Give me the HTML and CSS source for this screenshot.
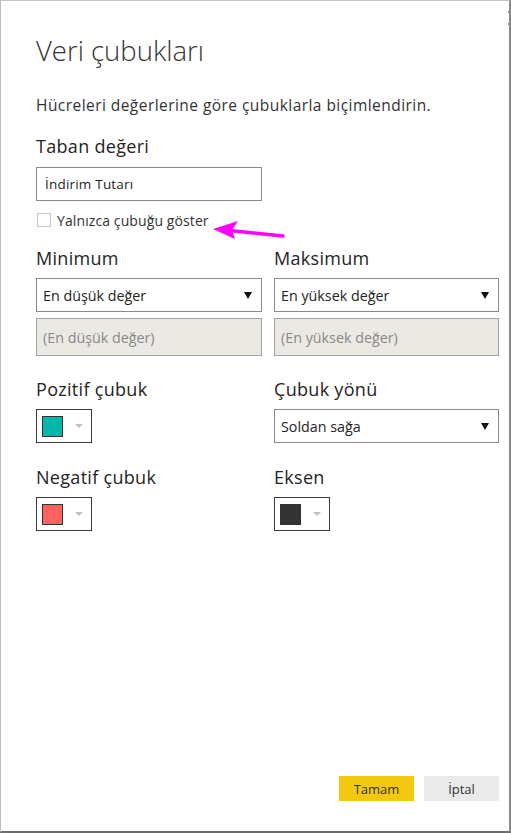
FILE: index.html
```html
<!DOCTYPE html>
<html lang="tr">
<head>
<meta charset="utf-8">
<title>Veri çubukları</title>
<link rel="stylesheet" href="styles.css">
</head>
<body>
<div class="dialog">
  <span class="edge-dot edge-dot-1"></span>
  <span class="edge-dot edge-dot-2"></span>
  <h1 class="title">Veri çubukları</h1>
  <p class="desc">Hücreleri değerlerine göre çubuklarla biçimlendirin.</p>

  <div class="label label-first">Taban değeri</div>
  <div class="textbox">İndirim Tutarı</div>
  <div class="check-row">
    <span class="checkbox"></span>
    <span class="check-label">Yalnızca çubuğu göster</span>
  </div>

  <div class="grid">
    <div class="col">
      <div class="label">Minimum</div>
      <div class="select"><span>En düşük değer</span><span class="caret"></span></div>
      <div class="disabled">(En düşük değer)</div>
    </div>
    <div class="col">
      <div class="label">Maksimum</div>
      <div class="select"><span>En yüksek değer</span><span class="caret"></span></div>
      <div class="disabled">(En yüksek değer)</div>
    </div>

    <div class="col">
      <div class="label label-gap">Pozitif çubuk</div>
      <div class="picker"><span class="swatch swatch-teal"></span><span class="picker-caret"></span></div>
    </div>
    <div class="col">
      <div class="label label-gap">Çubuk yönü</div>
      <div class="select"><span>Soldan sağa</span><span class="caret"></span></div>
    </div>

    <div class="col">
      <div class="label label-gap2">Negatif çubuk</div>
      <div class="picker"><span class="swatch swatch-red"></span><span class="picker-caret"></span></div>
    </div>
    <div class="col">
      <div class="label label-gap2">Eksen</div>
      <div class="picker"><span class="swatch swatch-dark"></span><span class="picker-caret"></span></div>
    </div>
  </div>

  <div class="footer">
    <button class="btn btn-primary">Tamam</button>
    <button class="btn btn-secondary">İptal</button>
  </div>

  <svg class="annot-arrow" width="90" height="30" viewBox="0 0 90 30">
    <line x1="20" y1="12" x2="78" y2="18" stroke="#ff00ff" stroke-width="3.4" stroke-linecap="round"/>
    <polygon points="8,11 33,3 27,12 30,21" fill="#ff00ff"/>
  </svg>
</div>
</body>
</html>
```

FILE: styles.css
```css
html, body {
  margin: 0;
  padding: 0;
  background: #ffffff;
}

body {
  font-family: "Open Sans", "Noto Sans", "DejaVu Sans", sans-serif;
  color: #333333;
}

.dialog {
  position: relative;
  box-sizing: border-box;
  width: 511px;
  height: 833px;
  border-top: 1px solid #c4c4c4;
  border-left: 1px solid #bdbdbd;
  border-right: 2px solid #8a8a8a;
  border-bottom: 2px solid #6e6e6e;
  padding: 0 10px 30px 35px;
  display: flex;
  flex-direction: column;
}

.edge-dot {
  position: absolute;
  right: -1px;
  width: 2px;
  height: 2px;
  background: #8c8c8c;
}
.edge-dot-1 { top: 10px; }
.edge-dot-2 { top: 22px; }

.title {
  margin: 30px 0 0 0;
  font-size: 27.5px;
  font-weight: 300;
  line-height: 40px;
  color: #333333;
  letter-spacing: 0;
}

.desc {
  margin: 24px 0 0 0;
  font-size: 15.5px;
  letter-spacing: 0.45px;
  line-height: 20px;
  color: #333333;
}

.label {
  font-size: 18px;
  letter-spacing: 0.3px;
  line-height: 24px;
  color: #252423;
  margin-top: 17px;
}
.label-first { margin-top: 19px; }
.label-gap { margin-top: 21px; }
.label-gap2 { margin-top: 22px; }

.textbox {
  box-sizing: border-box;
  width: 226px;
  height: 34px;
  margin-top: 9px;
  border: 1px solid #8a8a8a;
  padding: 0 8px;
  font-size: 13.5px;
  letter-spacing: 0.2px;
  line-height: 32px;
  color: #252423;
}

.check-row {
  display: flex;
  align-items: center;
  height: 18px;
  margin-top: 10px;
  gap: 6px;
}

.checkbox {
  box-sizing: border-box;
  width: 14px;
  height: 14px;
  margin-left: 1px;
  border: 1px solid #c6c6c6;
  background: #ffffff;
}

.check-label {
  font-size: 14px;
  letter-spacing: 0.1px;
  color: #333333;
}

.grid {
  display: grid;
  grid-template-columns: 226px 225px;
  column-gap: 12px;
}

.col {
  display: flex;
  flex-direction: column;
}

.select {
  box-sizing: border-box;
  height: 34px;
  margin-top: 8px;
  border: 1px solid #8a8a8a;
  padding: 0 9px 0 6px;
  display: flex;
  align-items: center;
  justify-content: space-between;
  font-size: 14.3px;
  color: #252423;
}

.caret {
  width: 0;
  height: 0;
  border-left: 4px solid transparent;
  border-right: 4px solid transparent;
  border-top: 7px solid #111111;
}

.disabled {
  box-sizing: border-box;
  height: 38px;
  margin-top: 6px;
  border: 1px solid #a3a3a3;
  background: #eae9e4;
  padding: 0 6px;
  display: flex;
  align-items: center;
  font-size: 14.3px;
  color: #8a8886;
}

.picker {
  box-sizing: border-box;
  width: 56px;
  height: 34px;
  margin-top: 8px;
  border: 1px solid #3b3b3b;
  display: flex;
  align-items: center;
  padding-left: 5px;
  gap: 12px;
}

.swatch {
  box-sizing: border-box;
  width: 21px;
  height: 21px;
  border: 1px solid #333333;
}
.swatch-teal { background: #01b8aa; }
.swatch-red { background: #fd625e; }
.swatch-dark { background: #333333; }

.picker-caret {
  width: 0;
  height: 0;
  border-left: 4px solid transparent;
  border-right: 4px solid transparent;
  border-top: 4px solid #c0c0c0;
}

.footer {
  margin-top: auto;
  display: flex;
  justify-content: flex-end;
  gap: 10px;
}

.btn {
  box-sizing: border-box;
  width: 75px;
  height: 25px;
  border: none;
  font-family: "Open Sans", "Noto Sans", sans-serif;
  font-size: 13px;
  color: #333333;
  padding: 0;
}
.btn-primary { background: #f2c811; }
.btn-secondary { background: #eaeaea; }

.annot-arrow {
  position: absolute;
  left: 204px;
  top: 217px;
}
```
